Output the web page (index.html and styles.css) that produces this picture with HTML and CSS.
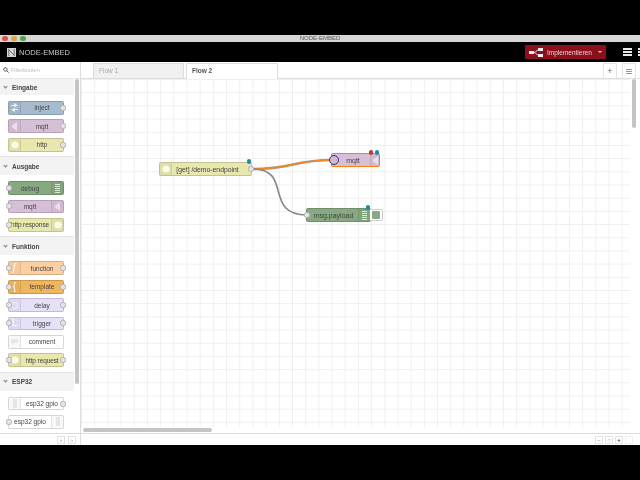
FILE: index.html
```html
<!DOCTYPE html>
<html lang="en">
<head>
    <meta charset="UTF-8">
    <title>NODE-EMBED</title>
    <link rel="stylesheet" href="styles.css">
</head>
<body>
    <div class="letterbox-top"></div>
    <div class="titlebar">
        <span class="light red"></span><span class="light yellow"></span><span class="light green"></span>
        <span class="window-title">NODE-EMBED</span>
    </div>
    <div class="header">
        <div class="logo">
            <svg width="9" height="9" viewBox="0 0 10 10"><rect width="10" height="10" fill="#d8d8d8"/><path d="M2 1v8M2 2l6 6M8 1v8" stroke="#666" fill="none"/></svg>
            <span>NODE-EMBED</span>
        </div>
        <div class="deploy">
            <svg width="14" height="9" viewBox="0 0 14 9"><path d="M4 4.5h2l3-3h1M6 4.5l3 3h1" stroke="#eee" fill="none"/><rect y="3" width="5" height="3" fill="#eee"/><rect x="9" width="5" height="3" fill="#eee"/><rect x="9" y="6" width="5" height="3" fill="#eee"/></svg>
            <span class="deploy-label">Implementieren</span>
            <span class="caret"></span>
        </div>
        <div class="burger"><i></i><i></i><i></i></div>
        <div class="burger cut"><i></i><i></i><i></i></div>
    </div>

    <div class="main">
        <div class="palette">
            <div class="filter">
                <svg width="6" height="6" viewBox="0 0 6 6"><circle cx="2.4" cy="2.4" r="1.7" stroke="#555" fill="none"/><path d="M3.7 3.7L5.6 5.6" stroke="#555"/></svg>
                <span>Filterknoten</span>
            </div>
            <div class="palette-body">
                <div class="palette-list">
                    <div class="cat-head first"><span class="chev"></span>Eingabe</div>
                    <div class="cat-body">
                        <div class="pnode inject"><span class="ico"><svg width="7" height="9" viewBox="0 0 7 9"><path d="M0 2h3V0l4 2.5L3 4.2V3H0zM7 6H4V4.8L0 6.8 4 9V7h3z" fill="#eef1f6"/></svg></span><span class="lbl">inject</span><span class="port out"></span></div>
                        <div class="pnode mqtt"><span class="ico"><svg width="5" height="9" viewBox="0 0 5 9"><path d="M5 0v9L0 5.5v-2z" fill="#e8dfea"/></svg></span><span class="lbl">mqtt</span><span class="port out"></span></div>
                        <div class="pnode http"><span class="ico"><svg width="8" height="8" viewBox="0 0 8 8"><circle cx="4" cy="4" r="3.6" fill="#fbfbe8"/></svg></span><span class="lbl">http</span><span class="port out"></span></div>
                    </div>
                    <div class="cat-head"><span class="chev"></span>Ausgabe</div>
                    <div class="cat-body">
                        <div class="pnode debug"><span class="port in"></span><span class="lbl">debug</span><span class="ico right"><svg width="5" height="9" viewBox="0 0 5 9"><path d="M0 .5h5M0 2.5h5M0 4.5h5M0 6.5h5M0 8.5h5" stroke="#dce8da"/></svg></span></div>
                        <div class="pnode mqtt"><span class="port in"></span><span class="lbl">mqtt</span><span class="ico right"><svg width="5" height="9" viewBox="0 0 5 9"><path d="M5 0v9L0 5.5v-2z" fill="#e8dfea"/></svg></span></div>
                        <div class="pnode http"><span class="port in"></span><span class="lbl wide">http response</span><span class="ico right"><svg width="8" height="8" viewBox="0 0 8 8"><circle cx="4" cy="4" r="3.6" fill="#fbfbe8"/></svg></span></div>
                    </div>
                    <div class="cat-head"><span class="chev"></span>Funktion</div>
                    <div class="cat-body">
                        <div class="pnode func"><span class="port in"></span><span class="ico glyph">ƒ</span><span class="lbl">function</span><span class="port out"></span></div>
                        <div class="pnode tmpl"><span class="port in"></span><span class="ico glyph">{</span><span class="lbl">template</span><span class="port out"></span></div>
                        <div class="pnode delay"><span class="port in"></span><span class="ico"><svg width="7" height="7" viewBox="0 0 7 7"><circle cx="3.5" cy="3.5" r="3" stroke="#f4f2fb" fill="none"/></svg></span><span class="lbl">delay</span><span class="port out"></span></div>
                        <div class="pnode delay"><span class="port in"></span><span class="ico glyph">L</span><span class="lbl">trigger</span><span class="port out"></span></div>
                        <div class="pnode comment"><span class="ico dark"><svg width="7" height="6" viewBox="0 0 7 6"><path d="M0 0h7v4H3L1 6V4H0z" fill="#e6e6e6"/></svg></span><span class="lbl">comment</span></div>
                        <div class="pnode http"><span class="port in"></span><span class="ico"><svg width="8" height="8" viewBox="0 0 8 8"><circle cx="4" cy="4" r="3.6" fill="#fbfbe8"/></svg></span><span class="lbl wide">http request</span><span class="port out"></span></div>
                    </div>
                    <div class="cat-head"><span class="chev"></span>ESP32</div>
                    <div class="cat-body">
                        <div class="pnode comment"><span class="ico dark"><svg width="4" height="9" viewBox="0 0 4 9"><rect width="4" height="9" fill="#e6e6e6"/></svg></span><span class="lbl">esp32 gpio</span><span class="port out"></span></div>
                        <div class="pnode comment"><span class="port in"></span><span class="lbl">esp32 gpio</span><span class="ico dark right"><svg width="4" height="9" viewBox="0 0 4 9"><rect width="4" height="9" fill="#e6e6e6"/></svg></span></div>
                    </div>
                </div>
                <div class="palette-scroll"><div class="palette-thumb"></div></div>
            </div>
            <div class="palette-foot">
                <span class="foot-btn">‹</span><span class="foot-btn">›</span>
            </div>
        </div>

        <div class="workspace">
            <div class="tabs">
                <div class="tab">Flow 1</div>
                <div class="tab active">Flow 2</div>
                <div class="tab-tools">
                    <span class="tool">+</span>
                    <span class="tool list"><i></i><i></i><i></i></span>
                </div>
            </div>
            <div class="canvas-row">
                <div class="canvas">
                    <svg class="wires" width="550" height="348" viewBox="0 0 550 348">
                        <path d="M172 90 C 212 90, 212 81, 252 81" stroke="#999" stroke-width="2.4" fill="none"/>
                        <path d="M172 90 C 212 90, 212 81, 252 81" stroke="#f5861f" stroke-width="1.4" fill="none"/>
                        <path d="M172 90 C 212 90, 182 136, 226 136" stroke="#888" stroke-width="1.6" fill="none"/>
                    </svg>

                    <div class="cnode http at-get">
                        <span class="ico"><svg width="8" height="8" viewBox="0 0 8 8"><circle cx="4" cy="4" r="3.6" fill="#fbfbe8"/></svg></span>
                        <span class="lbl">[get] /demo-endpoint</span>
                        <span class="port out"></span>
                        <span class="dot blue"></span>
                    </div>
                    <div class="cnode mqtt selected at-mqtt">
                        <span class="port in ringed"></span>
                        <span class="lbl">mqtt</span>
                        <span class="ico right"><svg width="5" height="9" viewBox="0 0 5 9"><path d="M5 0v9L0 5.5v-2z" fill="#e8dfea"/></svg></span>
                        <span class="dot red"></span>
                        <span class="dot blue"></span>
                    </div>
                    <div class="cnode debug at-debug">
                        <span class="port in"></span>
                        <span class="lbl">msg.payload</span>
                        <span class="ico right"><svg width="5" height="9" viewBox="0 0 5 9"><path d="M0 .5h5M0 2.5h5M0 4.5h5M0 6.5h5M0 8.5h5" stroke="#dce8da"/></svg></span>
                        <span class="dot blue"></span>
                        <span class="toggle"><i></i></span>
                    </div>
                </div>
                <div class="v-scroll"><div class="v-thumb"></div></div>
            </div>
            <div class="h-scroll"><div class="h-thumb"></div></div>
            <div class="work-foot">
                <span class="foot-btn">−</span><span class="foot-btn">○</span><span class="foot-btn strong">+</span><span class="foot-btn faint"></span>
            </div>
        </div>
    </div>
    <div class="letterbox-bottom"></div>
</body>
</html>
```

FILE: styles.css
```css
* {
    box-sizing: border-box;
}
html, body {
    margin: 0;
    padding: 0;
}
body {
    width: 640px;
    height: 480px;
    overflow: hidden;
    background: #000;
    font-family: "Liberation Sans", Arial, sans-serif;
    display: flex;
    flex-direction: column;
}
.letterbox-top {
    height: 35px;
    background: #000;
}
.letterbox-bottom {
    height: 35px;
    background: #000;
}
/* the reference is a soft, scaled down video frame */
.titlebar,
.header,
.main {
    filter: blur(0.4px);
}

/* mac window bar */
.titlebar {
    height: 7px;
    background: #d6d6d6;
    display: flex;
    align-items: center;
    padding-left: 2px;
    gap: 3.5px;
    position: relative;
}
.light {
    width: 5.5px;
    height: 5.5px;
    border-radius: 50%;
}
.red { background: #e0504a; }
.yellow { background: #e0a83c; }
.green { background: #4aa84a; }
.window-title {
    position: absolute;
    left: 0;
    right: 0;
    text-align: center;
    font-size: 6px;
    line-height: 7px;
    color: #555;
}

/* editor header */
.header {
    height: 20px;
    background: #000;
    display: flex;
    align-items: center;
    padding-left: 7px;
    color: #ccc;
}
.logo {
    display: flex;
    align-items: center;
    gap: 3px;
    font-size: 7.5px;
    color: #c8c8c8;
    flex: 1;
}
.deploy {
    width: 81px;
    height: 14px;
    background: #8c101c;
    border-radius: 1px;
    display: flex;
    align-items: center;
    padding-left: 4px;
    margin-right: 17px;
    font-size: 6.5px;
    color: #e8d0d2;
}
.deploy-label {
    margin-left: 4px;
}
.caret {
    margin-left: 6px;
    border-top: 2px solid #e8d0d2;
    border-left: 2.5px solid transparent;
    border-right: 2.5px solid transparent;
}
.burger {
    width: 9px;
    display: flex;
    flex-direction: column;
    gap: 1.5px;
    margin-right: 6px;
}
.burger.cut {
    width: 2px;
    margin-right: 0;
}
.burger i {
    height: 1.5px;
    background: #e8e8e8;
}

.main {
    height: 383px;
    display: flex;
    background: #fff;
}

/* palette */
.palette {
    width: 81px;
    display: flex;
    flex-direction: column;
    border-right: 1px solid #ddd;
    background: #fff;
}
.filter {
    height: 17px;
    display: flex;
    align-items: center;
    gap: 2px;
    padding-left: 3px;
    font-size: 5.5px;
    color: #bbb;
    border-bottom: 1px solid #e6e6e6;
}
.palette-body {
    flex: 1;
    display: flex;
    min-height: 0;
    overflow: hidden;
}
.palette-list {
    width: 74px;
}
.cat-head {
    height: 18px;
    background: #f3f3f3;
    font-size: 6.5px;
    font-weight: bold;
    color: #444;
    display: flex;
    align-items: center;
    padding-left: 4px;
    gap: 5px;
}
.cat-head.first {
    height: 16px;
}
.chev {
    width: 3px;
    height: 3px;
    border-right: 1px solid #777;
    border-bottom: 1px solid #777;
    transform: rotate(45deg);
    margin-top: -2px;
}
.cat-body {
    padding: 6px 0 0 8px;
    border-bottom: 1px solid #e4e4e4;
    background: #fff;
}
.palette-scroll {
    width: 6px;
    padding-left: 1px;
}
.palette-thumb {
    width: 4px;
    height: 305px;
    background: #c4c4c4;
    border-radius: 2px;
}
.palette-foot {
    height: 12px;
    border-top: 1px solid #ddd;
    display: flex;
    justify-content: flex-end;
    align-items: center;
    gap: 3px;
    padding-right: 4px;
}
.foot-btn {
    width: 8px;
    height: 8px;
    border: 1px solid #e2e2e2;
    font-size: 6px;
    line-height: 6px;
    text-align: center;
    color: #888;
}

/* nodes */
.pnode,
.cnode {
    display: flex;
    align-items: center;
    position: relative;
    border: 1px solid rgba(0, 0, 0, 0.16);
    border-radius: 2px;
    font-size: 6.5px;
    color: #444;
}
.pnode {
    width: 56px;
    height: 13.8px;
    margin-bottom: 4.6px;
}
.ico {
    width: 12px;
    align-self: stretch;
    display: flex;
    align-items: center;
    justify-content: center;
    flex: none;
    background: rgba(0, 0, 0, 0.03);
    border-right: 1px solid rgba(0, 0, 0, 0.08);
    color: #fff;
}
.ico.right {
    border-right: 0;
    border-left: 1px solid rgba(0, 0, 0, 0.08);
}
.ico.dark {
    background: #f8f8f8;
}
.glyph {
    font-size: 10px;
    line-height: 10px;
}
.lbl {
    flex: 1;
    text-align: center;
    white-space: nowrap;
}
.lbl.wide {
    letter-spacing: -0.1px;
}
.port {
    position: absolute;
    top: 50%;
    width: 6px;
    height: 6px;
    margin-top: -3px;
    background: #e4e4e4;
    border: 1px solid #b0b0b0;
    border-radius: 2.5px;
}
.port.out { right: -3px; }
.port.in { left: -3px; }

.inject { background: #a6bbcf; }
.mqtt { background: #d8bfd8; }
.http { background: #e7e7ae; }
.debug { background: #87a980; }
.func { background: #fdd0a2; }
.tmpl { background: #f0b65e; }
.delay { background: #e6e0f8; }
.comment { background: #fff; }

/* workspace */
.workspace {
    flex: 1;
    display: flex;
    flex-direction: column;
    min-width: 0;
}
.tabs {
    height: 17px;
    display: flex;
    align-items: flex-end;
    gap: 2px;
    padding-left: 12px;
    background: #fff;
    border-bottom: 1px solid #ddd;
}
.tab {
    width: 91px;
    height: 15px;
    background: #f0f0f0;
    border: 1px solid #ddd;
    border-bottom: 0;
    font-size: 6.5px;
    line-height: 13px;
    padding-left: 5px;
    color: #aaa;
}
.tab.active {
    width: 92px;
    height: 16px;
    margin-bottom: -1px;
    background: #fff;
    color: #555;
    font-weight: bold;
}
.tab-tools {
    margin-left: auto;
    display: flex;
    gap: 5px;
    padding: 0 4px 0 0;
    align-self: stretch;
    align-items: flex-end;
}
.tool {
    width: 14px;
    height: 15px;
    border: 1px solid #e4e4e4;
    border-bottom: 0;
    text-align: center;
    font-size: 9px;
    line-height: 14px;
    color: #666;
}
.tool.list {
    display: flex;
    flex-direction: column;
    justify-content: center;
    align-items: center;
    gap: 1px;
}
.tool.list i {
    width: 6px;
    height: 1px;
    background: #999;
}
.canvas-row {
    flex: 1;
    display: flex;
    min-height: 0;
}
.canvas {
    flex: 1;
    position: relative;
    background-color: #fff;
    background-image:
        linear-gradient(#efefef 1px, transparent 1px),
        linear-gradient(90deg, #efefef 1px, transparent 1px);
    background-size: 13.2px 13.2px;
}
.wires {
    position: absolute;
    left: 0;
    top: 0;
}
.cnode {
    position: absolute;
    height: 14px;
    font-size: 7px;
}
.at-get {
    left: 78px;
    top: 83px;
    width: 93px;
    font-size: 6.8px;
}
.at-get .lbl {
    padding-right: 8px;
}
.at-mqtt {
    left: 250px;
    top: 74px;
    width: 49px;
}
.at-debug {
    left: 225px;
    top: 129px;
    width: 65px;
}
.selected {
    border: 1px solid #ff7f0e;
}
.ringed {
    left: -3px;
    width: 10px;
    height: 10px;
    margin-top: -5px;
    border: 1.5px solid #3b2a7a;
    border-radius: 50%;
    background: #cdbccd;
}
.at-mqtt .ico {
    width: 9px;
}
.at-mqtt .lbl {
    padding-left: 4px;
}
.at-debug .lbl {
    padding-left: 2px;
}
.dot {
    position: absolute;
    top: -4px;
    right: 0;
    width: 4.5px;
    height: 4.5px;
    border-radius: 50%;
}
.dot.blue { background: #1f8aa8; }
.dot.red {
    right: 6px;
    background: #c0392b;
}
.toggle {
    position: absolute;
    right: -13px;
    top: 0;
    width: 13px;
    height: 12px;
    background: #fff;
    border: 1px solid #ccc;
    border-left: 0;
    border-radius: 0 2px 2px 0;
    display: flex;
    align-items: center;
    justify-content: center;
}
.toggle i {
    width: 8px;
    height: 8px;
    background: #87a980;
    border-radius: 1px;
}
.v-scroll {
    width: 10px;
    padding-left: 2px;
}
.v-thumb {
    width: 4px;
    height: 49px;
    background: #c4c4c4;
    border-radius: 2px;
}
.h-scroll {
    height: 6px;
    padding: 1px 0 0 2px;
}
.h-thumb {
    width: 129px;
    height: 4px;
    background: #c4c4c4;
    border-radius: 2px;
}
.work-foot {
    height: 12px;
    border-top: 1px solid #ddd;
    display: flex;
    justify-content: flex-end;
    align-items: center;
    gap: 2px;
    padding-right: 7px;
}
.foot-btn.strong {
    color: #444;
    font-weight: bold;
}
.foot-btn.faint {
    border-color: #f0f0f0;
}
```
